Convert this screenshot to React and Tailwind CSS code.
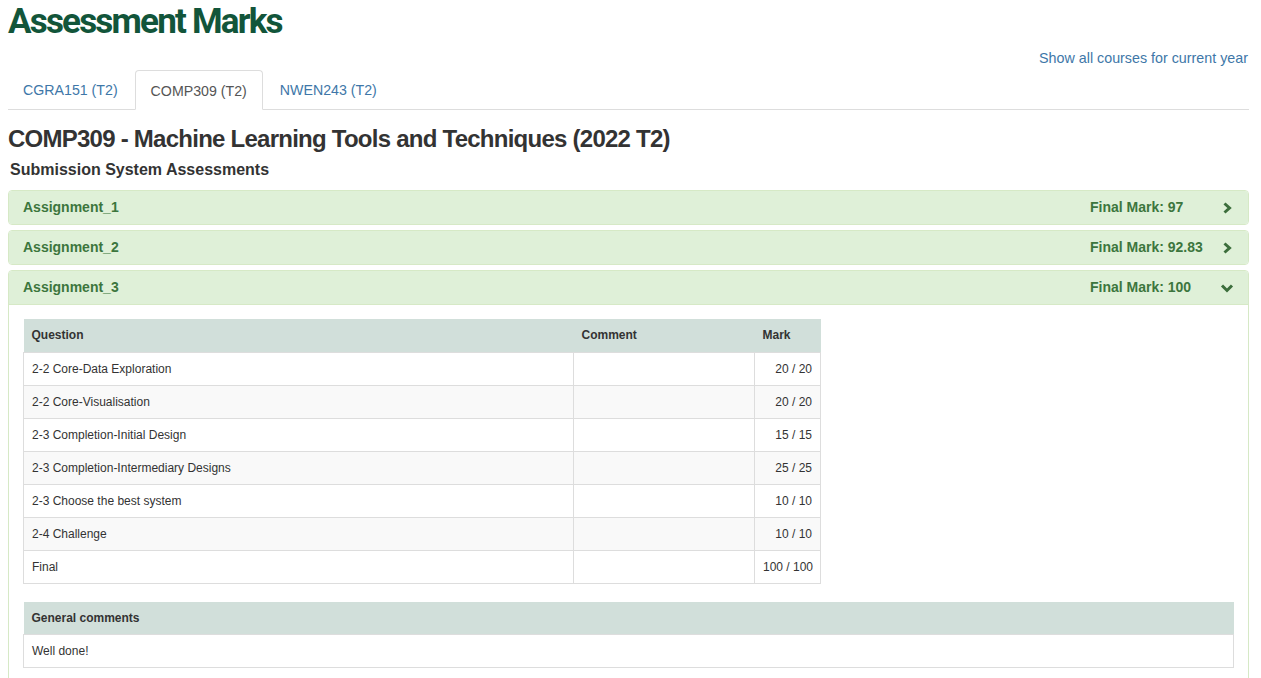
import React from "react";

const rows = [
  ["2-2 Core-Data Exploration", "", "20 / 20"],
  ["2-2 Core-Visualisation", "", "20 / 20"],
  ["2-3 Completion-Initial Design", "", "15 / 15"],
  ["2-3 Completion-Intermediary Designs", "", "25 / 25"],
  ["2-3 Choose the best system", "", "10 / 10"],
  ["2-4 Challenge", "", "10 / 10"],
  ["Final", "", "100 / 100"],
];

function ChevronRight() {
  return (
    <svg width="12" height="12" viewBox="0 0 12 12">
      <polyline points="3.5,1.5 8.5,6 3.5,10.5" fill="none" stroke="#3c6e3c" strokeWidth="3" />
    </svg>
  );
}
function ChevronDown() {
  return (
    <svg width="14" height="12" viewBox="0 0 14 12">
      <polyline points="2,3.5 7,8.5 12,3.5" fill="none" stroke="#3c6e3c" strokeWidth="3" />
    </svg>
  );
}

function PanelHeader({ name, mark, open }) {
  return (
    <div className="flex items-center h-[33px] bg-[#dff0d8] text-[#3c763d] font-bold text-[14px] pl-[14px] pr-[11px]">
      <div className="flex-1">{name}</div>
      <div className="w-[127px]">Final Mark: {mark}</div>
      <div className="w-[20px] flex justify-center items-center">
        {open ? <ChevronDown /> : <ChevronRight />}
      </div>
    </div>
  );
}

export default function App() {
  return (
    <div className="w-[1261px] bg-white text-[#333] pl-[8px] pr-[12px]" style={{ fontFamily: "'Liberation Sans', Arial, sans-serif" }}>
      <h1
        className="text-[#12553a] font-bold text-[35px] leading-[44px] tracking-[-1.8px]"
        style={{ fontFamily: "Roboto, 'Open Sans', sans-serif" }}
      >
        Assessment Marks
      </h1>
      <div className="flex justify-end h-[24px] items-end text-[14.3px] leading-[20px] pr-[1px]">
        <a className="text-[#3e77a8]">Show all courses for current year</a>
      </div>
      <div className="flex border-b border-[#ddd] h-[40px] mt-[2px] text-[14.2px] leading-[20px]">
        <div className="px-[15px] pt-[10px] mr-[2px] text-[#3e77a8]">CGRA151 (T2)</div>
        <div className="px-[15px] pt-[10px] mr-[2px] text-[#555] bg-white border border-[#ddd] border-b-white rounded-t-[4px] mb-[-1px] h-[40px]">
          COMP309 (T2)
        </div>
        <div className="px-[15px] pt-[10px] mr-[2px] text-[#3e77a8]">NWEN243 (T2)</div>
      </div>
      <h3 className="text-[24px] font-bold leading-[26px] mt-[16px] tracking-[-0.75px]">
        COMP309 - Machine Learning Tools and Techniques (2022 T2)
      </h3>
      <h4 className="text-[16px] font-bold leading-[20px] mt-[8px] ml-[2px]">Submission System Assessments</h4>
      <div className="mt-[10px] flex flex-col gap-[5px]">
        <div className="border border-[#d6e9c6] rounded-[4px] overflow-hidden">
          <PanelHeader name="Assignment_1" mark="97" />
        </div>
        <div className="border border-[#d6e9c6] rounded-[4px] overflow-hidden">
          <PanelHeader name="Assignment_2" mark="92.83" />
        </div>
        <div className="border border-[#d6e9c6] rounded-[4px] overflow-hidden">
          <div className="border-b border-[#d6e9c6]">
            <PanelHeader name="Assignment_3" mark="100" open />
          </div>
          <div className="px-[14px] pt-[14px] pb-[14px]">
            <table className="w-[797px] table-fixed border-collapse text-[12px]">
              <colgroup>
                <col className="w-[550px]" />
                <col className="w-[181px]" />
                <col className="w-[66px]" />
              </colgroup>
              <thead>
                <tr className="bg-[#d1dfda] h-[33px]">
                  <th className="text-left font-bold px-[8px]">Question</th>
                  <th className="text-left font-bold px-[8px]">Comment</th>
                  <th className="text-left font-bold px-[8px]">Mark</th>
                </tr>
              </thead>
              <tbody>
                {rows.map((r, i) => (
                  <tr key={i} className={(i % 2 === 1 ? "bg-[#f9f9f9]" : "bg-white") + " h-[33px]"}>
                    <td className="border border-[#ddd] px-[8px]">{r[0]}</td>
                    <td className="border border-[#ddd] px-[8px]">{r[1]}</td>
                    <td className="border border-[#ddd] px-[8px] text-right whitespace-nowrap">{r[2]}</td>
                  </tr>
                ))}
              </tbody>
            </table>
            <table className="w-full mt-[18px] border-collapse text-[12px]">
              <thead>
                <tr className="bg-[#d1dfda] h-[33px]">
                  <th className="text-left font-bold px-[8px]">General comments</th>
                </tr>
              </thead>
              <tbody>
                <tr className="h-[33px]">
                  <td className="border border-[#ddd] px-[8px]">Well done!</td>
                </tr>
              </tbody>
            </table>
          </div>
        </div>
      </div>
    </div>
  );
}
